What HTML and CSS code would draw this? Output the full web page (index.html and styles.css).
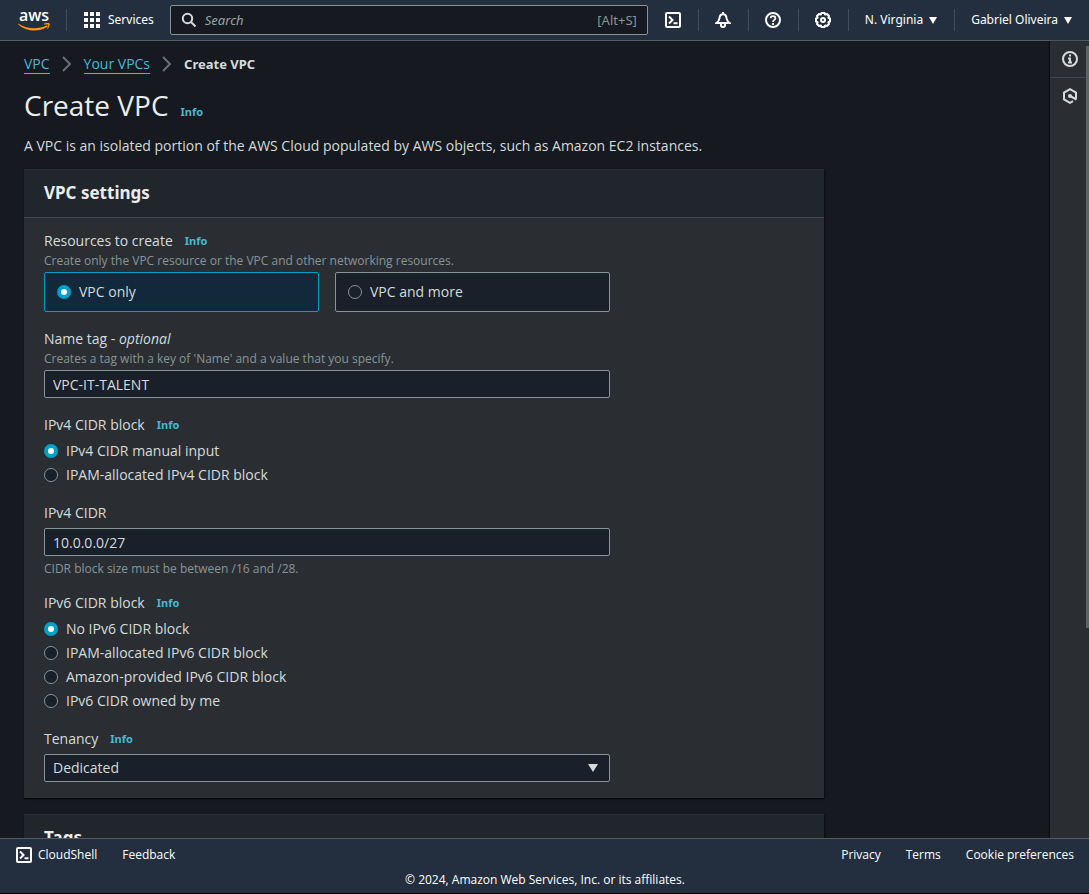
FILE: index.html
```
<!DOCTYPE html>
<html lang="en">
<head>
<meta charset="utf-8">
<meta name="viewport" content="width=device-width, initial-scale=1">
<title>Create VPC</title>
<link rel="stylesheet" href="styles.css">
</head>
<body>
<header class="topbar">
  <a class="logo" href="#" aria-label="AWS home">
    <span class="logo-word">aws</span>
    <svg class="logo-smile" viewBox="0 0 32 9" width="32" height="9" aria-hidden="true"><path d="M0.5 0.8C9 6.2 20 6.700 28.6 2.600 29.5 2.2 30 3.4 29.2 4 20 9.5 8 8.600 0.3 1.5 0 1 .2.6.5.8z" fill="#f90"/><path d="M26 .6C28-.3 31-.2 31.600.4 32 1.200 31.200 4.500 29.600 6L29.200 5.600C29.800 4 30.500 2.200 30.100 1.700 29.700 1.200 27.500 1.400 26 1.600z" fill="#f90"/></svg>
  </a>
  <span class="divider"></span>
  <button class="nav-button services" type="button">
    <svg viewBox="0 0 16 16" width="16" height="16" fill="#fff" aria-hidden="true"><path d="M0 0h4v4H0zM6 0h4v4H6zM12 0h4v4h-4zM0 6h4v4H0zM6 6h4v4H6zM12 6h4v4h-4zM0 12h4v4H0zM6 12h4v4H6zM12 12h4v4h-4z"/></svg>
    Services
  </button>
  <label class="search">
    <svg viewBox="0 0 16 16" width="16" height="16" fill="none" stroke="#d5dbdb" stroke-width="2" aria-hidden="true"><circle cx="6.500" cy="6.500" r="4.700"/><path d="M10 10l4.500 4.500"/></svg>
    <input class="search-input" type="text" placeholder="Search" aria-label="Search">
    <span class="shortcut">[Alt+S]</span>
  </label>
  <nav class="tools" aria-label="Account tools">
    <button class="tool" type="button" aria-label="CloudShell">
      <svg viewBox="0 0 16 16" width="16" height="16" fill="none" stroke="#fff" stroke-width="2" aria-hidden="true"><rect x="1" y="1" width="14" height="14" rx="1"/><path d="M4 4.500l3.500 3.500L4 11.500M8.500 11.200H12.500"/></svg>
    </button>
    <button class="tool" type="button" aria-label="Notifications">
      <svg viewBox="0 0 16 16" width="16" height="16" fill="none" stroke="#fff" stroke-width="2" aria-hidden="true"><path d="M8 0v2M1.500 11h13C12.500 9.500 11.800 8.500 11.600 6.500 11.400 3.500 10 2.200 8 2.200S4.600 3.500 4.400 6.500C4.200 8.500 3.500 9.500 1.500 11zM6 12v1.200a2 1.800 0 0 0 4 0V12"/></svg>
    </button>
    <button class="tool" type="button" aria-label="Help">
      <svg viewBox="0 0 16 16" width="16" height="16" fill="none" stroke="#fff" stroke-width="2" aria-hidden="true"><circle cx="8" cy="8" r="7"/><path d="M5.600 6.300C5.600 3.300 10.400 3.300 10.400 6.200 10.400 8 8 7.800 8 10M8 11v2" stroke-width="1.800"/></svg>
    </button>
    <button class="tool" type="button" aria-label="Settings">
      <svg viewBox="0 0 16 16" width="16" height="16" fill="none" stroke="#fff" stroke-width="2" stroke-linejoin="round" aria-hidden="true"><path d="M6.500 1h3l.7 1.600 1.800-.6 2 2-.6 1.800L15 6.500v3l-1.600.7.6 1.800-2 2-1.800-.6L9.500 15h-3l-.7-1.600L4 14l-2-2 .6-1.800L1 9.500v-3l1.600-.7L2 4l2-2 1.800.6z"/><circle cx="8" cy="8" r="2"/></svg>
    </button>
    <button class="nav-button menu" type="button">N. Virginia
      <svg viewBox="0 0 8 7" width="8" height="7" fill="#fff" aria-hidden="true"><path d="M0 0h8L4 7z"/></svg>
    </button>
    <button class="nav-button menu" type="button">Gabriel Oliveira
      <svg viewBox="0 0 8 7" width="8" height="7" fill="#fff" aria-hidden="true"><path d="M0 0h8L4 7z"/></svg>
    </button>
  </nav>
</header>

<div class="workspace">
  <main class="content">
    <nav class="breadcrumbs" aria-label="Breadcrumbs">
      <a class="crumb" href="#">VPC</a>
      <svg viewBox="0 0 10 16" width="10" height="16" fill="none" stroke="#687078" stroke-width="2" aria-hidden="true"><path d="M1 1l7 7-7 7"/></svg>
      <a class="crumb" href="#">Your VPCs</a>
      <svg viewBox="0 0 10 16" width="10" height="16" fill="none" stroke="#687078" stroke-width="2" aria-hidden="true"><path d="M1 1l7 7-7 7"/></svg>
      <span class="crumb-current">Create VPC</span>
    </nav>
    <div class="title-row">
      <h1 class="title">Create VPC</h1>
      <a class="info" href="#">Info</a>
    </div>
    <p class="intro">A VPC is an isolated portion of the AWS Cloud populated by AWS objects, such as Amazon EC2 instances.</p>

    <section class="card">
      <h2 class="card-title">VPC settings</h2>
      <form class="card-body">
        <div class="field" role="radiogroup" aria-labelledby="resources">
          <div class="label"><span id="resources">Resources to create</span><a class="info" href="#">Info</a></div>
          <p class="hint">Create only the VPC resource or the VPC and other networking resources.</p>
          <div class="tiles">
            <label class="tile tile-selected"><input class="radio" type="radio" name="resources" checked>VPC only</label>
            <label class="tile"><input class="radio" type="radio" name="resources">VPC and more</label>
          </div>
        </div>
        <div class="field">
          <div class="label"><label for="name-tag">Name tag - <i>optional</i></label></div>
          <p class="hint">Creates a tag with a key of 'Name' and a value that you specify.</p>
          <input class="control" id="name-tag" type="text" value="VPC-IT-TALENT">
        </div>
        <div class="field" role="radiogroup" aria-labelledby="v4-block">
          <div class="label"><span id="v4-block">IPv4 CIDR block</span><a class="info" href="#">Info</a></div>
          <div class="options">
            <label class="option"><input class="radio" type="radio" name="v4" checked>IPv4 CIDR manual input</label>
            <label class="option"><input class="radio" type="radio" name="v4">IPAM-allocated IPv4 CIDR block</label>
          </div>
        </div>
        <div class="field">
          <div class="label label-spaced"><label for="v4-cidr">IPv4 CIDR</label></div>
          <input class="control" id="v4-cidr" type="text" value="10.0.0.0/27">
          <p class="hint hint-below">CIDR block size must be between /16 and /28.</p>
        </div>
        <div class="field" role="radiogroup" aria-labelledby="v6-block">
          <div class="label"><span id="v6-block">IPv6 CIDR block</span><a class="info" href="#">Info</a></div>
          <div class="options">
            <label class="option"><input class="radio" type="radio" name="v6" checked>No IPv6 CIDR block</label>
            <label class="option"><input class="radio" type="radio" name="v6">IPAM-allocated IPv6 CIDR block</label>
            <label class="option"><input class="radio" type="radio" name="v6">Amazon-provided IPv6 CIDR block</label>
            <label class="option"><input class="radio" type="radio" name="v6">IPv6 CIDR owned by me</label>
          </div>
        </div>
        <div class="field">
          <div class="label label-spaced"><label for="tenancy">Tenancy</label><a class="info" href="#">Info</a></div>
          <div class="select-wrap">
            <select class="control" id="tenancy"><option>Default</option><option selected>Dedicated</option></select>
            <svg class="select-arrow" viewBox="0 0 10 8" width="10" height="8" fill="#d5dbdb" aria-hidden="true"><path d="M0 0h10L5 8z"/></svg>
          </div>
        </div>
      </form>
    </section>

    <section class="card">
      <h2 class="card-title">Tags</h2>
    </section>
  </main>
  <aside class="rail">
    <button class="rail-button" type="button" aria-label="Info panel">
      <svg viewBox="0 0 16 16" width="16" height="16" fill="none" stroke="#d5dbdb" stroke-width="2" aria-hidden="true"><circle cx="8" cy="8" r="7"/><path d="M8 3.500v2M6 7.500h2v4M6 11.500h4"/></svg>
    </button>
    <button class="rail-button" type="button" aria-label="Diagnostics">
      <svg viewBox="0 0 16 16" width="16" height="16" fill="none" stroke="#d5dbdb" stroke-width="2" aria-hidden="true"><path d="M14 10.800V4.600L8 1.200 2 4.600v6.800L8 14.800l3-1.700"/><circle cx="8" cy="8" r="2" fill="#d5dbdb" stroke="none"/><path d="M8 8l6.500 3.500"/></svg>
    </button>
  </aside>
  <div class="scroll-track"><div class="scroll-thumb"></div></div>
</div>

<footer class="footer">
  <div class="footer-row">
    <button class="footer-shell" type="button">
      <svg viewBox="0 0 16 16" width="16" height="16" fill="none" stroke="#fff" stroke-width="2" aria-hidden="true"><rect x="1" y="1" width="14" height="14" rx="1"/><path d="M4 4.500l3.500 3.500L4 11.500M8.500 11.200H12.500"/></svg>
      CloudShell
    </button>
    <a class="footer-link" href="#">Feedback</a>
    <span class="spacer"></span>
    <a class="footer-link" href="#">Privacy</a>
    <a class="footer-link" href="#">Terms</a>
    <a class="footer-link" href="#">Cookie preferences</a>
  </div>
  <p class="copyright">© 2024, Amazon Web Services, Inc. or its affiliates.</p>
</footer>
</body>
</html>
```

FILE: styles.css
```
* { box-sizing: border-box; }

body {
  margin: 0;
  height: 100vh;
  display: flex;
  flex-direction: column;
  overflow: hidden;
  background: #16191f;
  color: #d5dbdb;
  font: 14px/22px "Open Sans", "Noto Sans", sans-serif;
}

svg { display: block; flex: none; }
p, h1, h2 { margin: 0; }
button, input, select { font: inherit; color: inherit; }
button { padding: 0; border: 0; background: none; cursor: pointer; }

/* Top bar */
.topbar {
  display: flex;
  align-items: center;
  flex: none;
  height: 41px;
  background: #232f3e;
  border-bottom: 1px solid #545b64;
  color: #fff;
  font-family: "Noto Sans", sans-serif;
  font-size: 12px;
}
.logo {
  display: flex;
  flex-direction: column;
  align-items: center;
  width: 66px;
  padding-left: 2px;
  color: #fff;
  text-decoration: none;
}
.logo-word { font: 600 16px/14px "Open Sans", sans-serif; }
.logo-smile { margin-top: 1px; }
.divider { width: 1px; height: 22px; background: #414d5c; }
.nav-button { display: flex; align-items: center; white-space: nowrap; }
.services { gap: 8px; padding: 0 16px 0 17px; }
.search {
  display: flex;
  align-items: center;
  flex: 1;
  min-width: 0;
  gap: 8px;
  height: 30px;
  padding: 0 10px;
  background: #16191f;
  border: 1px solid #879596;
  border-radius: 2px;
  color: #879596;
  font-size: 13px;
}
.search-input { flex: 1; min-width: 0; padding: 0; border: 0; outline: 0; background: none; }
.search-input::placeholder { color: #95a5a6; font-style: italic; opacity: 1; }
.tools { display: flex; align-items: center; }
.tool { display: flex; justify-content: center; width: 50px; height: 22px; align-items: center; }
.tool + .tool, .menu { border-left: 1px solid #414d5c; }
.menu { gap: 6px; height: 22px; padding: 0 17px 0 16px; }

/* Workspace */
.workspace { display: flex; flex: 1; min-height: 0; }
.content { flex: 1; min-width: 0; padding: 12px 24px 0; overflow: hidden; }
.breadcrumbs { display: flex; align-items: center; gap: 12px; height: 22px; }
.crumb { color: #44b9d6; line-height: 18px; text-decoration: none; border-bottom: 1px solid #44b9d6; }
.crumb-current { font: 700 13px/22px "Noto Sans", sans-serif; }
.title-row { display: flex; align-items: baseline; gap: 12px; margin-top: 12px; }
.title { color: #eaeded; font-size: 28px; font-weight: 400; line-height: 36px; }
.info { color: #44b9d6; font: 700 11px/22px "Noto Sans", sans-serif; text-decoration: none; }
.intro { margin: 12px 0; }

.card {
  max-width: 800px;
  margin-bottom: 16px;
  background: #2a2e33;
  border-top: 1px solid #2a2e33;
  box-shadow: 0 1px 1px rgba(0, 0, 0, .5), 1px 1px 2px rgba(0, 0, 0, .5);
}
.card-title {
  padding: 9px 20px 10px;
  background: #21252c;
  border-bottom: 1px solid #414750;
  color: #eaeded;
  font: 700 17px/28px "Noto Sans", sans-serif;
}
.card-body { display: flex; flex-direction: column; gap: 16px; padding: 12px 20px 16px; }
.field { max-width: 566px; }
.label { display: flex; gap: 12px; }
.label-spaced { margin-bottom: 4px; }
.hint { margin-bottom: 2px; color: #879596; font-size: 12px; line-height: 18px; }
.hint-below { margin: 4px 0 -2px; }
.tiles { display: grid; grid-template-columns: 1fr 1fr; gap: 16px; }
.tile {
  display: flex;
  align-items: center;
  gap: 8px;
  height: 40px;
  padding: 0 12px;
  background: #1a2029;
  border: 1px solid #879596;
  border-radius: 2px;
}
.tile-selected { background: #12293b; border-color: #00a1c9; }
.options { display: flex; flex-direction: column; gap: 2px; padding-top: 4px; }
.option { display: flex; align-items: center; gap: 8px; }
.radio {
  appearance: none;
  flex: none;
  width: 14px;
  height: 14px;
  margin: 0;
  background: #1a2029;
  border: 1px solid #879596;
  border-radius: 50%;
}
.radio:checked { background: #fff; border: 4px solid #00a1c9; }
.control {
  display: block;
  appearance: none;
  width: 100%;
  height: 28px;
  padding: 0 8px;
  background: #1a2029;
  border: 1px solid #879596;
  border-radius: 2px;
  outline: 0;
}
.select-wrap { position: relative; }
.select-arrow { position: absolute; top: 10px; right: 12px; pointer-events: none; }

/* Right rail */
.rail { width: 36px; background: #2a2e33; box-shadow: -1px 0 1px rgba(0, 0, 0, .5); }
.rail-button { display: flex; align-items: center; justify-content: center; width: 100%; height: 36px; padding-left: 3px; }
.rail-button:first-child { height: 37px; border-bottom: 1px solid #414750; }
.scroll-track { width: 3px; padding-top: 5px; background: #2a2e33; }
.scroll-thumb { height: 73.500%; background: #5f6162; }

/* Footer */
.footer {
  flex: none;
  padding: 5px 15px 2px 16px;
  background: #232f3e;
  border-top: 1px solid #545b64;
  border-bottom: 1px solid #000;
  color: #fff;
  font-size: 12px;
}
.footer-row { display: flex; align-items: center; gap: 25px; }
.footer-shell { display: flex; align-items: center; gap: 6px; }
.footer-link { color: inherit; text-decoration: none; }
.spacer { flex: 1; }
.copyright { margin-top: 3px; text-align: center; }
```
